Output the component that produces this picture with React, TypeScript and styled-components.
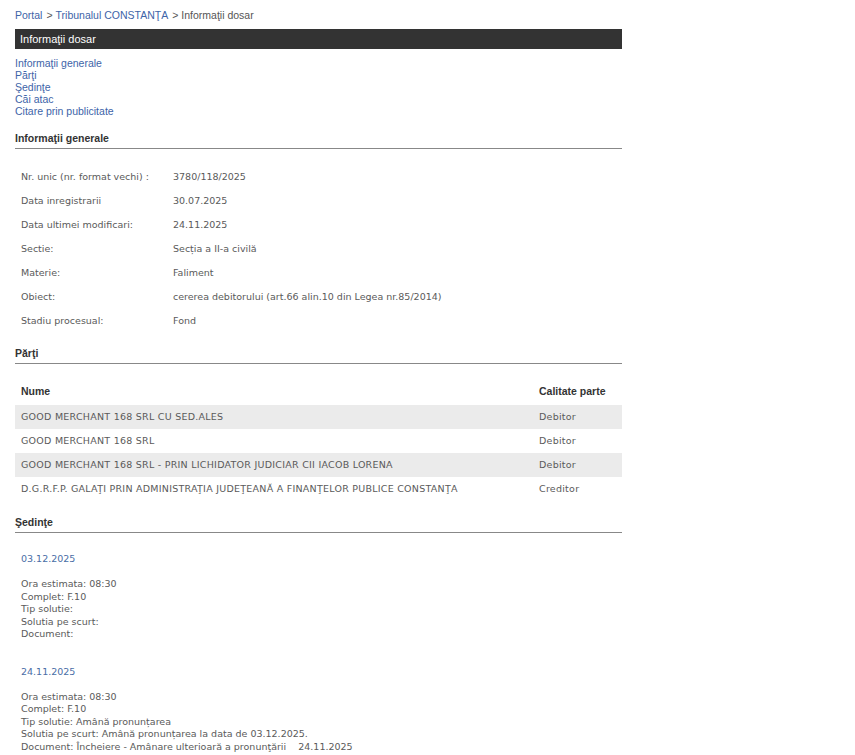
import React from 'react'
import styled, { createGlobalStyle } from 'styled-components'

const GlobalStyle = createGlobalStyle`
  body {
    margin: 0;
    background: #fff;
    font-family: 'Liberation Sans', Arial, sans-serif;
  }
`

const Page = styled.div`
  width: 607px;
  padding: 8px 0 0 15px;
`

const Breadcrumb = styled.div`
  font-size: 10.5px;
  line-height: 14px;
  color: #555;
  a {
    color: #3d64a8;
    text-decoration: none;
  }
`

const Sep = styled.span`
  margin: 0 3px 0 4px;
`

const TitleBar = styled.div`
  margin-top: 7px;
  height: 20px;
  line-height: 20px;
  background: #333;
  color: #fff;
  font-size: 11px;
  padding-left: 5px;
`

const NavList = styled.div`
  margin-top: 8px;
  display: flex;
  flex-direction: column;
  a {
    font-size: 10.5px;
    line-height: 12px;
    color: #3d64a8;
    text-decoration: none;
  }
`

const SectionTitle = styled.div<{ $top: number }>`
  margin-top: ${(p) => p.$top}px;
  font-size: 10.5px;
  font-weight: bold;
  color: #333;
  line-height: 14px;
  padding-bottom: 3px;
  border-bottom: 1px solid #888;
`

const BodyText = styled.div`
  font-family: 'DejaVu Sans', Verdana, sans-serif;
  font-size: 9.5px;
  color: #5a5a5a;
`

const InfoTable = styled(BodyText)`
  margin-top: 16px;
  display: grid;
  grid-template-columns: 152px 1fr;
`

const InfoCell = styled.div`
  height: 24px;
  line-height: 24px;
  padding-left: 6px;
`

const PartsTable = styled(BodyText)`
  margin-top: 13px;
  display: grid;
  grid-template-columns: 1fr 89px;
  letter-spacing: 0.25px;
`

const HeadCell = styled.div`
  height: 28px;
  line-height: 28px;
  padding-left: 6px;
  font-family: 'Liberation Sans', Arial, sans-serif;
  font-weight: bold;
  font-size: 10.5px;
  letter-spacing: 0;
  color: #333;
`

const PartCell = styled.div<{ $shade: boolean }>`
  height: 24px;
  line-height: 24px;
  padding-left: 6px;
  background: ${(p) => (p.$shade ? '#ebebeb' : 'transparent')};
`

const Hearing = styled(BodyText)`
  padding-left: 6px;
  margin-top: 19px;
  & + & {
    margin-top: 24px;
  }
`

const HearingDate = styled.div`
  color: #4a6da6;
  line-height: 14px;
  margin-bottom: 12px;
`

const HearingLine = styled.div`
  line-height: 12.5px;
`

const info: [string, string][] = [
  ['Nr. unic (nr. format vechi) :', '3780/118/2025'],
  ['Data inregistrarii', '30.07.2025'],
  ['Data ultimei modificari:', '24.11.2025'],
  ['Sectie:', 'Secția a II-a civilă'],
  ['Materie:', 'Faliment'],
  ['Obiect:', 'cererea debitorului (art.66 alin.10 din Legea nr.85/2014)'],
  ['Stadiu procesual:', 'Fond'],
]

const parts: [string, string][] = [
  ['GOOD MERCHANT 168 SRL CU SED.ALES', 'Debitor'],
  ['GOOD MERCHANT 168 SRL', 'Debitor'],
  ['GOOD MERCHANT 168 SRL - PRIN LICHIDATOR JUDICIAR CII IACOB LORENA', 'Debitor'],
  ['D.G.R.F.P. GALAŢI PRIN ADMINISTRAŢIA JUDEŢEANĂ A FINANŢELOR PUBLICE CONSTANŢA', 'Creditor'],
]

const hearings = [
  {
    date: '03.12.2025',
    lines: ['Ora estimata: 08:30', 'Complet: F.10', 'Tip solutie:', 'Solutia pe scurt:', 'Document:'],
  },
  {
    date: '24.11.2025',
    lines: [
      'Ora estimata: 08:30',
      'Complet: F.10',
      'Tip solutie: Amână pronunțarea',
      'Solutia pe scurt: Amână pronunțarea la data de 03.12.2025.',
      'Document: Încheiere - Amânare ulterioară a pronunţării\u00a0\u00a0\u00a0\u00a024.11.2025',
    ],
  },
]

const App: React.FC = () => {
  return (
    <Page>
      <GlobalStyle />
      <Breadcrumb>
        <a href="#">Portal</a>
        <Sep>&gt;</Sep>
        <a href="#">Tribunalul CONSTANŢA</a>
        <Sep>&gt;</Sep>
        Informaţii dosar
      </Breadcrumb>
      <TitleBar>Informaţii dosar</TitleBar>
      <NavList>
        <a href="#">Informaţii generale</a>
        <a href="#">Părţi</a>
        <a href="#">Şedinţe</a>
        <a href="#">Căi atac</a>
        <a href="#">Citare prin publicitate</a>
      </NavList>

      <SectionTitle $top={14}>Informaţii generale</SectionTitle>
      <InfoTable>
        {info.map(([label, value]) => (
          <React.Fragment key={label}>
            <InfoCell>{label}</InfoCell>
            <InfoCell>{value}</InfoCell>
          </React.Fragment>
        ))}
      </InfoTable>

      <SectionTitle $top={13}>Părţi</SectionTitle>
      <PartsTable>
        <HeadCell>Nume</HeadCell>
        <HeadCell>Calitate parte</HeadCell>
        {parts.map(([name, role], i) => (
          <React.Fragment key={name}>
            <PartCell $shade={i % 2 === 0}>{name}</PartCell>
            <PartCell $shade={i % 2 === 0}>{role}</PartCell>
          </React.Fragment>
        ))}
      </PartsTable>

      <SectionTitle $top={14}>Şedinţe</SectionTitle>
      {hearings.map((h) => (
        <Hearing key={h.date}>
          <HearingDate>{h.date}</HearingDate>
          {h.lines.map((l) => (
            <HearingLine key={l}>{l}</HearingLine>
          ))}
        </Hearing>
      ))}
    </Page>
  )
}

export default App
